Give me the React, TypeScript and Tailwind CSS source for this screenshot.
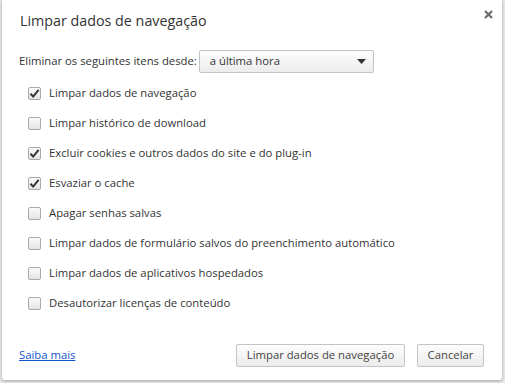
import { useState } from "react";

type TItem = {
  label: string;
  checked: boolean;
};

const initialItems: TItem[] = [
  { label: "Limpar dados de navegação", checked: true },
  { label: "Limpar histórico de download", checked: false },
  { label: "Excluir cookies e outros dados do site e do plug-in", checked: true },
  { label: "Esvaziar o cache", checked: true },
  { label: "Apagar senhas salvas", checked: false },
  { label: "Limpar dados de formulário salvos do preenchimento automático", checked: false },
  { label: "Limpar dados de aplicativos hospedados", checked: false },
  { label: "Desautorizar licenças de conteúdo", checked: false },
];

const CheckBox = ({ checked, onToggle }: { checked: boolean; onToggle: () => void }) => (
  <button
    type="button"
    onClick={onToggle}
    className="w-[13px] h-[13px] rounded-[2px] border border-[#a9a9a9] bg-gradient-to-b from-[#fbfbfb] to-[#e4e4e4] flex items-center justify-center shrink-0"
  >
    {checked && (
      <svg width="11" height="11" viewBox="0 0 11 11">
        <path d="M1.5 5.8 L4.2 8.6 L9.6 1.8" fill="none" stroke="#333" strokeWidth="2" />
      </svg>
    )}
  </button>
);

export default function App() {
  const [items, setItems] = useState(initialItems);

  const toggle = (index: number) => {
    setItems(items.map((item, i) => (i === index ? { ...item, checked: !item.checked } : item)));
  };

  return (
    <div className="w-[505px] h-[383px] bg-[#e6e6e6] pl-[2px] pb-[3px] pr-[3px] font-['Open_Sans',sans-serif] text-[#333]">
      <div className="relative w-full h-full bg-white rounded-b-[3px] shadow-[0_1px_3px_rgba(0,0,0,0.3)] flex flex-col">
        <button className="absolute top-[10px] right-[9px] w-[9px] h-[9px]">
          <svg width="9" height="9" viewBox="0 0 9 9">
            <path d="M1 1 L8 8 M8 1 L1 8" stroke="#6b6b6b" strokeWidth="2.2" />
          </svg>
        </button>
        <h1 className="pl-[18px] pt-[11px] text-[14.3px] text-[#333] leading-[20px]">
          Limpar dados de navegação
        </h1>
        <div className="flex items-center gap-[2px] pl-[17px] mt-[19px] text-[11.3px]">
          <span>Eliminar os seguintes itens desde:</span>
          <div className="w-[175px] h-[23px] border border-[#c4c4c4] rounded-[2px] bg-gradient-to-b from-[#fdfdfd] to-[#ececec] flex items-center justify-between pl-[10px] pr-[7px]">
            <span>a última hora</span>
            <svg width="9" height="5" viewBox="0 0 9 5">
              <path d="M0 0 H9 L4.5 5 Z" fill="#333" />
            </svg>
          </div>
        </div>
        <div className="flex flex-col gap-[17px] pl-[26px] mt-[14px] text-[11.3px]">
          {items.map((item, index) => (
            <label key={index} className="flex items-center gap-[8px] h-[13px]">
              <CheckBox checked={item.checked} onToggle={() => toggle(index)} />
              <span>{item.label}</span>
            </label>
          ))}
        </div>
        <div className="mt-auto flex items-center justify-between pl-[17px] pr-[18px] pb-[13px] text-[11.3px]">
          <a href="#" className="text-[#15c] underline">
            Saiba mais
          </a>
          <div className="flex gap-[12px]">
            <button className="w-[169px] h-[23px] border border-[#c4c4c4] rounded-[2px] bg-gradient-to-b from-[#fdfdfd] to-[#ececec] text-[#444]">
              Limpar dados de navegação
            </button>
            <button className="w-[67px] h-[23px] border border-[#c4c4c4] rounded-[2px] bg-gradient-to-b from-[#fdfdfd] to-[#ececec] text-[#444]">
              Cancelar
            </button>
          </div>
        </div>
      </div>
    </div>
  );
}
